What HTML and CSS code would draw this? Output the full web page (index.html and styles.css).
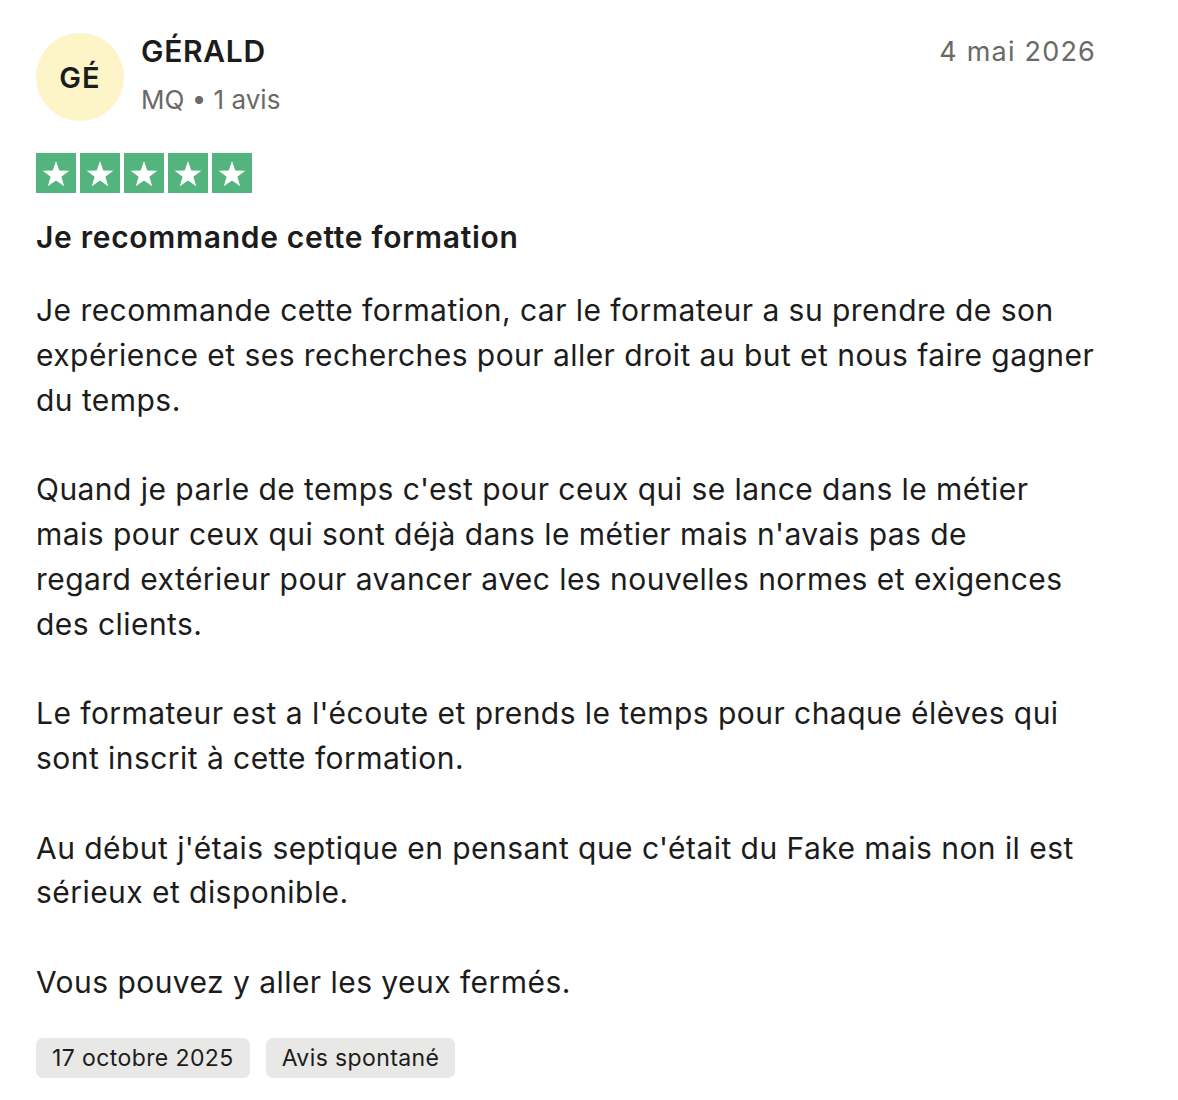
FILE: index.html
```html
<!DOCTYPE html>
<html lang="fr">
<head>
<meta charset="utf-8">
<title>Avis</title>
<link rel="stylesheet" href="styles.css">
</head>
<body>
<article class="review">
  <header class="review-header">
    <div class="avatar">GÉ</div>
    <div class="consumer">
      <div class="name">GÉRALD</div>
      <div class="meta">MQ • 1 avis</div>
    </div>
    <time class="date">4 mai 2026</time>
  </header>

  <div class="stars">
    <span class="star"><svg viewBox="0 0 40 40"><path d="M20 8L23.29 17.47L33.31 17.67L25.33 23.73L28.23 33.33L20 27.6L11.77 33.33L14.67 23.73L6.69 17.67L16.71 17.47Z"/></svg></span>
    <span class="star"><svg viewBox="0 0 40 40"><path d="M20 8L23.29 17.47L33.31 17.67L25.33 23.73L28.23 33.33L20 27.6L11.77 33.33L14.67 23.73L6.69 17.67L16.71 17.47Z"/></svg></span>
    <span class="star"><svg viewBox="0 0 40 40"><path d="M20 8L23.29 17.47L33.31 17.67L25.33 23.73L28.23 33.33L20 27.6L11.77 33.33L14.67 23.73L6.69 17.67L16.71 17.47Z"/></svg></span>
    <span class="star"><svg viewBox="0 0 40 40"><path d="M20 8L23.29 17.47L33.31 17.67L25.33 23.73L28.23 33.33L20 27.6L11.77 33.33L14.67 23.73L6.69 17.67L16.71 17.47Z"/></svg></span>
    <span class="star"><svg viewBox="0 0 40 40"><path d="M20 8L23.29 17.47L33.31 17.67L25.33 23.73L28.23 33.33L20 27.6L11.77 33.33L14.67 23.73L6.69 17.67L16.71 17.47Z"/></svg></span>
  </div>

  <h2 class="title">Je recommande cette formation</h2>

  <div class="body">
    <p>Je recommande cette formation, car le formateur a su prendre de son<br>expérience et ses recherches pour aller droit au but et nous faire gagner<br>du temps.</p>
    <p>Quand je parle de temps c'est pour ceux qui se lance dans le métier<br>mais pour ceux qui sont déjà dans le métier mais n'avais pas de<br>regard extérieur pour avancer avec les nouvelles normes et exigences<br>des clients.</p>
    <p>Le formateur est a l'écoute et prends le temps pour chaque élèves qui<br>sont inscrit à cette formation.</p>
    <p>Au début j'étais septique en pensant que c'était du Fake mais non il est<br>sérieux et disponible.</p>
    <p>Vous pouvez y aller les yeux fermés.</p>
  </div>

  <div class="tags">
    <span class="tag">17 octobre 2025</span>
    <span class="tag">Avis spontané</span>
  </div>
</article>
</body>
</html>
```

FILE: styles.css
```css
html, body {
  margin: 0;
  padding: 0;
  background: #ffffff;
}

body {
  font-family: Inter, "Noto Sans", "Liberation Sans", sans-serif;
  color: #1c1c1c;
}

.review {
  width: 1080px;
  padding: 33px 0 40px 36px;
}

.review-header {
  display: flex;
  align-items: flex-start;
  padding-right: 20px;
}

.avatar {
  width: 88px;
  height: 88px;
  border-radius: 50%;
  background: #fdf5c8;
  display: flex;
  align-items: center;
  justify-content: center;
  font-size: 29px;
  font-weight: 600;
  letter-spacing: 1px;
  color: #1c1c1c;
  flex-shrink: 0;
}

.consumer {
  margin-left: 17px;
  display: flex;
  flex-direction: column;
  gap: 13px;
}

.name {
  font-size: 30px;
  line-height: 36px;
  font-weight: 600;
  letter-spacing: 0.7px;
}

.meta {
  font-size: 26px;
  line-height: 36px;
  color: #696a66;
}

.date {
  margin-left: auto;
  margin-top: 1px;
  font-size: 27px;
  line-height: 36px;
  color: #696a66;
  letter-spacing: 1.2px;
}

.stars {
  display: flex;
  gap: 4px;
  margin-top: 32px;
}

.star {
  width: 40px;
  height: 40px;
  background: #54b47e;
  display: block;
}

.star svg {
  width: 40px;
  height: 40px;
  display: block;
  fill: #ffffff;
}

.title {
  margin: 26px 0 0 0;
  font-size: 30px;
  line-height: 36px;
  font-weight: 600;
  letter-spacing: 0.7px;
}

.body {
  margin-top: 33px;
  font-size: 30px;
  line-height: 44.8px;
  letter-spacing: 0.45px;
}

.body p {
  margin: 0 0 44.8px 0;
  white-space: nowrap;
}

.body p:last-child {
  margin-bottom: 0;
}

.tags {
  display: flex;
  gap: 16px;
  margin-top: 33px;
}

.tag {
  display: flex;
  align-items: center;
  height: 40px;
  padding: 0 16px;
  border-radius: 7px;
  background: #e8e8e6;
  font-size: 23px;
  letter-spacing: 0.4px;
  color: #1c1c1c;
}
```
